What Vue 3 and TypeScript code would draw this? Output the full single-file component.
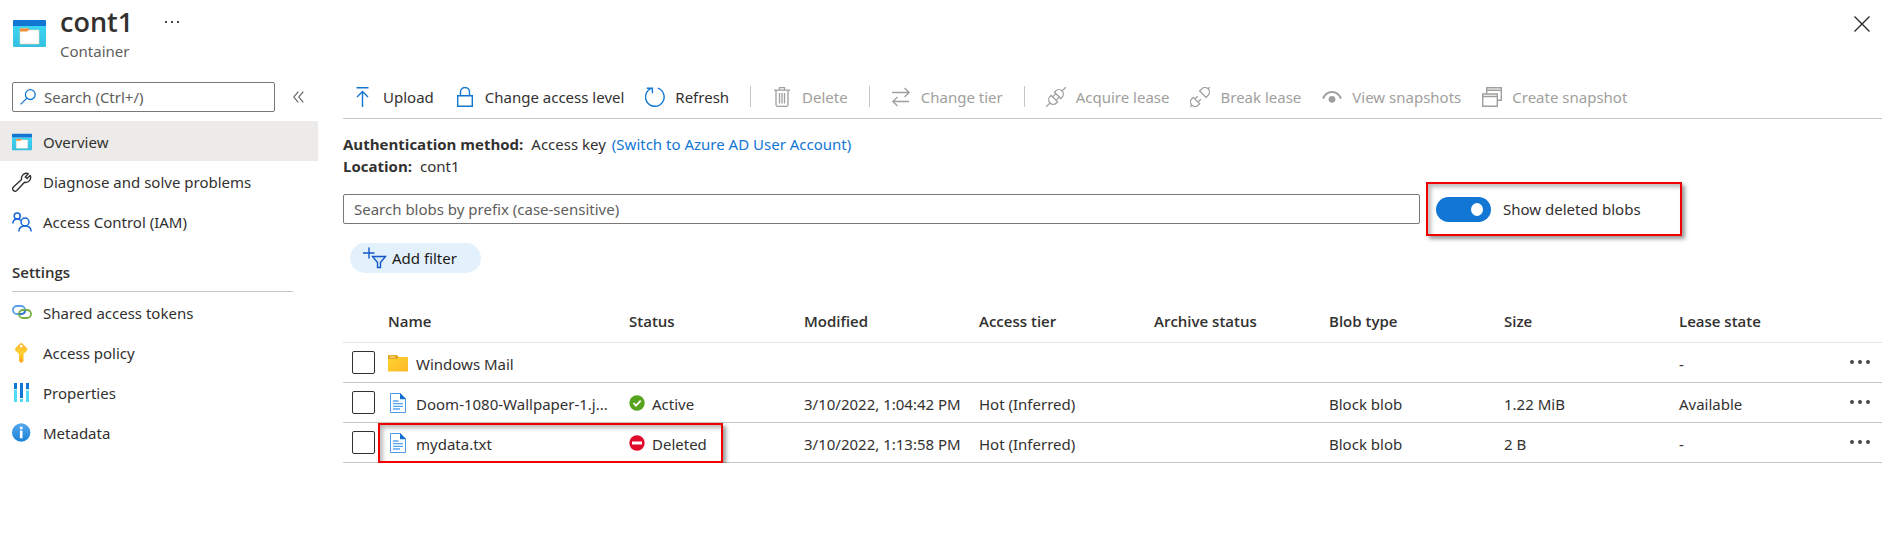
<script setup lang="ts">
import { ref } from 'vue'

interface NavItem {
  label: string
  icon: string
  active?: boolean
}

interface Command {
  label: string
  icon: string
  disabled?: boolean
  divider?: boolean
}

interface Blob {
  name: string
  kind: 'folder' | 'file'
  status: '' | 'Active' | 'Deleted'
  modified: string
  tier: string
  type: string
  size: string
  lease: string
  marked?: boolean
}

const generalItems: NavItem[] = [
  { label: 'Overview', icon: 'container', active: true },
  { label: 'Diagnose and solve problems', icon: 'wrench' },
  { label: 'Access Control (IAM)', icon: 'people' },
]

const settingsItems: NavItem[] = [
  { label: 'Shared access tokens', icon: 'link' },
  { label: 'Access policy', icon: 'key' },
  { label: 'Properties', icon: 'bars' },
  { label: 'Metadata', icon: 'info' },
]

const navGroups = [
  { title: '', items: generalItems },
  { title: 'Settings', items: settingsItems },
]

const commands: Command[] = [
  { label: 'Upload', icon: 'upload' },
  { label: 'Change access level', icon: 'lock' },
  { label: 'Refresh', icon: 'refresh' },
  { label: 'Delete', icon: 'trash', disabled: true, divider: true },
  { label: 'Change tier', icon: 'swap', disabled: true, divider: true },
  { label: 'Acquire lease', icon: 'plug', disabled: true, divider: true },
  { label: 'Break lease', icon: 'unplug', disabled: true },
  { label: 'View snapshots', icon: 'eye', disabled: true },
  { label: 'Create snapshot', icon: 'windows', disabled: true },
]

const columns = ['Name', 'Status', 'Modified', 'Access tier', 'Archive status', 'Blob type', 'Size', 'Lease state']

const blobs: Blob[] = [
  { name: 'Windows Mail', kind: 'folder', status: '', modified: '', tier: '', type: '', size: '', lease: '-' },
  { name: 'Doom-1080-Wallpaper-1.j...', kind: 'file', status: 'Active', modified: '3/10/2022, 1:04:42 PM', tier: 'Hot (Inferred)', type: 'Block blob', size: '1.22 MiB', lease: 'Available' },
  { name: 'mydata.txt', kind: 'file', status: 'Deleted', modified: '3/10/2022, 1:13:58 PM', tier: 'Hot (Inferred)', type: 'Block blob', size: '2 B', lease: '-', marked: true },
]

const menuQuery = ref('')
const prefix = ref('')
const showDeleted = ref(true)
const selected = ref<string[]>([])
</script>

<template>
  <div class="page">
    <svg class="defs" width="0" height="0" aria-hidden="true">
      <defs>
        <linearGradient id="g-cyan" x1="0" y1="0" x2="0" y2="1">
          <stop offset="0" stop-color="#3bd5f5" />
          <stop offset="1" stop-color="#35bfe0" />
        </linearGradient>
        <linearGradient id="g-gold" x1="0" y1="0" x2="0" y2="1">
          <stop offset="0" stop-color="#ffb52e" />
          <stop offset="0.5" stop-color="#ffd02e" />
          <stop offset="1" stop-color="#f9a51c" />
        </linearGradient>
        <linearGradient id="g-folder" x1="0" y1="0" x2="1" y2="1">
          <stop offset="0" stop-color="#ffd52e" />
          <stop offset="1" stop-color="#fdb827" />
        </linearGradient>
        <linearGradient id="g-info" x1="0" y1="0" x2="0" y2="1">
          <stop offset="0" stop-color="#55a8ec" />
          <stop offset="1" stop-color="#1b83d6" />
        </linearGradient>
        <symbol id="i-container" viewBox="0 0 33 27">
          <path d="M0 6h33v19.500a1.500 1.500 0 0 1-1.500 1.500h-30A1.500 1.500 0 0 1 0 25.500z" fill="url(#g-cyan)" />
          <path d="M1 0h31a1 1 0 0 1 1 1v5H0V1a1 1 0 0 1 1-1z" fill="#1176d4" />
          <path d="M7 9.500a1 1 0 0 1 1-1h7l1.500 1.500H26v14H7z" fill="#fff" stroke="#efd3ae" stroke-width="0.600" />
          <path d="M7 9.500a1 1 0 0 1 1-1h7.500l1 1-2.500 2H7z" fill="#f28c34" />
        </symbol>
        <symbol id="i-wrench" viewBox="0 0 20 20">
          <path d="M18.200 3.400 15 6.400 13.300 5l3-3.300A5 5 0 0 0 9.600 7.400L1.400 15a2.300 2.300 0 0 0 3.400 3.400l7.700-8.100a5 5 0 0 0 5.700-6.900z" fill="none" stroke="#323130" stroke-width="1.400" stroke-linejoin="round" />
        </symbol>
        <symbol id="i-people" viewBox="0 0 20 20">
          <g fill="none" stroke="#1766d6" stroke-width="1.500">
            <circle cx="5.200" cy="4" r="3" />
            <circle cx="13" cy="10" r="4" />
            <path d="M.800 11.500C1 8.300 3 7 5.400 7c1.600 0 2.700.600 3.500 1.500M6.800 19.500c.200-3.500 2.900-5.500 6.200-5.500s6 2 6.200 5.500" />
          </g>
        </symbol>
        <symbol id="i-link" viewBox="0 0 20 20">
          <rect x="1" y="3" width="12" height="8" rx="4" fill="none" stroke="#5a9fe8" stroke-width="1.800" />
          <rect x="7" y="7" width="12" height="8" rx="4" fill="none" stroke="#76b041" stroke-width="1.800" />
          <path d="M7.500 11H9.500c2 0 3.500-1.500 3.500-3.500" fill="none" stroke="#3479cf" stroke-width="1.800" />
        </symbol>
        <symbol id="i-key" viewBox="0 0 20 20">
          <path fill-rule="evenodd" d="M8 .500q1.200-.800 2.400 0l4.500 4.500q1 1.500 0 2.800L11.500 11v7l-2 2-2.500-1.700V11L3.500 7.800Q2.500 6.500 3.500 5zM9.200 1.700a1.400 1.400 0 1 0 .01 0z" fill="url(#g-gold)" />
        </symbol>
        <symbol id="i-bars" viewBox="0 0 20 20">
          <path d="M2 6h3v13H2zM8 16h3v3H8zM14 8h3v11h-3z" fill="#50dcf7" />
          <path d="M2 0h3v6H2zM8 0h3v15H8zM14 0h3v6h-3z" fill="#1176d4" />
          <path d="M2 6h3v1H2zM14 6h3v2h-3z" fill="#bdeefb" />
        </symbol>
        <symbol id="i-info" viewBox="0 0 20 20">
          <circle cx="9.200" cy="9.500" r="9.200" fill="url(#g-info)" />
          <path d="M7.900 3.800h2.600v2.400H7.900zM7.900 7.400h2.600v7.800H7.900z" fill="#fff" />
        </symbol>
        <symbol id="i-upload" viewBox="0 0 20 20">
          <path d="M3.500.700h12M9.500 20V4.500M4 10l5.500-5.500L15 10" fill="none" stroke="currentColor" stroke-width="1.400" />
        </symbol>
        <symbol id="i-lock" viewBox="0 0 20 20">
          <path d="M2.700 8.700h14.600v10.600H2.700zM5.500 8.700V5a4.500 4.500 0 0 1 9 0v3.700" fill="none" stroke="currentColor" stroke-width="1.400" />
        </symbol>
        <symbol id="i-refresh" viewBox="0 0 20 20">
          <path d="M12.800 1.200a9.300 9.300 0 1 1-6.500.200M1.800 1.200h5.600v5" fill="none" stroke="currentColor" stroke-width="1.400" />
        </symbol>
        <symbol id="i-trash" viewBox="0 0 20 20">
          <path d="M2 3.200h16M7.500 3V.700h5V3M4 3.500v14.300q0 1.500 1.500 1.500h9q1.500 0 1.500-1.500V3.500M7.500 6v10.500M10 6v10.500M12.500 6v10.500" fill="none" stroke="currentColor" stroke-width="1.300" />
        </symbol>
        <symbol id="i-swap" viewBox="0 0 20 20">
          <path d="M1 5.500h17M13.500 1l4.700 4.500L13.500 10M18 14.500H2M6.500 10l-4.700 4.500L6.500 19" fill="none" stroke="currentColor" stroke-width="1.300" />
        </symbol>
        <symbol id="i-plug" viewBox="0 0 20 20">
          <g transform="rotate(-45 10 10)" fill="none" stroke="currentColor" stroke-width="1.300">
            <path d="M-4 10h5M19 10h5M7.700 5.500H6a4.500 4.500 0 0 0 0 9h1.700zM12.300 5.500H14a4.500 4.500 0 0 1 0 9h-1.700zM7.700 7.500h4.600M7.700 12.500h4.600" />
          </g>
        </symbol>
        <symbol id="i-unplug" viewBox="0 0 20 20">
          <g transform="rotate(-45 10 10)" fill="none" stroke="currentColor" stroke-width="1.300">
            <path d="M-4 10h2.500M21.500 10h2.500M5 5.500H3a4.500 4.500 0 0 0 0 9h2zM14 5.500h3a4.500 4.500 0 0 1 0 9h-3zM5 7.800h4M5 12.200h4" />
          </g>
        </symbol>
        <symbol id="i-eye" viewBox="0 0 20 20">
          <path d="M1 11.500C3 7 6 5 10 5s7 2 9 6.500" fill="none" stroke="currentColor" stroke-width="2" />
          <circle cx="10" cy="12.300" r="3.400" fill="currentColor" />
        </symbol>
        <symbol id="i-windows" viewBox="0 0 20 20">
          <path d="M.700 7h14.600v12.300H.700zM.700 9.500h14.600M4.700 6.500V.700h14.600v12.600H16M4.700 3.200h14.600" fill="none" stroke="currentColor" stroke-width="1.400" />
        </symbol>
        <symbol id="i-folder" viewBox="0 0 20 20">
          <path d="M0 3q0-.800.800-.800h8L10.500 4H20v14.500H0z" fill="url(#g-folder)" />
          <path d="M0 3q0-.800.800-.800h8L10.500 4 9 5.800H0z" fill="#e09a13" />
          <path d="M1.500 3.500h6v1h-6z" fill="#fff1c2" />
        </symbol>
        <symbol id="i-file" viewBox="0 0 20 20">
          <path d="M2.500.500h9.800l5.200 5.300v13.700h-15z" fill="#fff" stroke="#4f9be6" />
          <path d="M12 0l6 6.200h-6z" fill="#1470cf" />
          <path d="M5 8h5.500M5 10.700h10M5 13.300h10M5 16h7" stroke="#5aa5ee" stroke-width="1.300" />
        </symbol>
      </defs>
    </svg>

    <header class="header">
      <svg class="header-icon"><use href="#i-container" /></svg>
      <div class="heading">
        <div class="title-row">
          <h1>cont1</h1>
          <button class="icon-button" aria-label="More actions">
            <svg width="15" height="3" viewBox="0 0 15 3"><path d="M0 0h2v2H0zM6 0h2v2H6zM12 0h2v2h-2z" fill="#484644" /></svg>
          </button>
        </div>
        <p>Container</p>
      </div>
      <button class="icon-button close" aria-label="Close">
        <svg width="16" height="16" viewBox="0 0 16 16"><path d="M.500.500l15 15M15.500.500l-15 15" stroke="#252423" stroke-width="1.300" /></svg>
      </button>
    </header>

    <div class="body">
      <aside class="sidebar">
        <div class="menu-search">
          <label class="search-box">
            <svg width="16" height="16" viewBox="0 0 16 16"><path d="M.600 15.400l6-6M15.200 5.600a4.900 4.900 0 1 1-9.800 0 4.900 4.900 0 0 1 9.800 0z" fill="none" stroke="#1176d4" stroke-width="1.300" /></svg>
            <input v-model="menuQuery" type="text" placeholder="Search (Ctrl+/)" aria-label="Search menu" />
          </label>
          <button class="icon-button" aria-label="Collapse menu">
            <svg width="11" height="12" viewBox="0 0 11 12"><path d="M5.300.700L.800 6l4.500 5.300M10.300.700L5.800 6l4.500 5.300" fill="none" stroke="#605e5c" stroke-width="1.100" /></svg>
          </button>
        </div>
        <nav>
          <section v-for="group in navGroups" :key="group.title">
            <h2 v-if="group.title">{{ group.title }}</h2>
            <ul>
              <li v-for="item in group.items" :key="item.label">
                <a href="#" class="nav-link" :class="{ active: item.active }">
                  <svg class="nav-icon"><use :href="'#i-' + item.icon" /></svg>
                  <span>{{ item.label }}</span>
                </a>
              </li>
            </ul>
          </section>
        </nav>
      </aside>

      <main class="main">
        <div class="toolbar">
          <template v-for="command in commands" :key="command.label">
            <span v-if="command.divider" class="divider"></span>
            <button class="command" :disabled="command.disabled">
              <svg class="command-icon"><use :href="'#i-' + command.icon" /></svg>
              <span>{{ command.label }}</span>
            </button>
          </template>
        </div>

        <dl class="facts">
          <div>
            <dt>Authentication method:</dt>
            <dd><span>Access key</span> <a href="#">(Switch to Azure AD User Account)</a></dd>
          </div>
          <div>
            <dt>Location:</dt>
            <dd>cont1</dd>
          </div>
        </dl>

        <div class="filter-row">
          <input v-model="prefix" class="prefix" type="text" placeholder="Search blobs by prefix (case-sensitive)" aria-label="Search blobs by prefix" />
          <label class="toggle callout">
            <input v-model="showDeleted" type="checkbox" role="switch" />
            <span>Show deleted blobs</span>
          </label>
        </div>

        <button class="add-filter">
          <svg width="24" height="22" viewBox="0 0 24 22">
            <path d="M0 6h11.500M6 .500v11" stroke="#1557c8" stroke-width="1.400" />
            <path d="M9.500 9.500h13l-5 6v5h-3v-5z" fill="#d5e9fb" stroke="#1557c8" stroke-width="1.400" />
          </svg>
          <span>Add filter</span>
        </button>

        <table class="blobs">
          <colgroup>
            <col class="col-check" />
            <col />
            <col v-for="n in 6" :key="n" class="col-data" />
            <col class="col-lease" />
            <col class="col-menu" />
          </colgroup>
          <thead>
            <tr>
              <td></td>
              <th v-for="column in columns" :key="column" scope="col">{{ column }}</th>
              <td></td>
            </tr>
          </thead>
          <tbody>
            <tr v-for="blob in blobs" :key="blob.name">
              <td class="check-cell"><input v-model="selected" type="checkbox" :value="blob.name" :aria-label="'Select ' + blob.name" /></td>
              <td class="name-cell">
                <div class="name">
                  <svg class="blob-icon"><use :href="'#i-' + blob.kind" /></svg>
                  <span>{{ blob.name }}</span>
                </div>
                <i v-if="blob.marked" class="row-callout callout"></i>
              </td>
              <td>
                <div v-if="blob.status" class="status">
                  <svg class="status-icon" viewBox="0 0 16 16">
                    <template v-if="blob.status === 'Active'">
                      <circle cx="8" cy="8" r="7.700" fill="#57a31d" />
                      <path d="M4.500 8l2.500 2.700 4.700-5" fill="none" stroke="#fff" stroke-width="1.800" />
                    </template>
                    <template v-else>
                      <circle cx="8" cy="8" r="7.700" fill="#e00b2b" />
                      <path d="M3 6.500h10v3H3z" fill="#fff" />
                    </template>
                  </svg>
                  <span>{{ blob.status }}</span>
                </div>
              </td>
              <td>{{ blob.modified }}</td>
              <td>{{ blob.tier }}</td>
              <td></td>
              <td>{{ blob.type }}</td>
              <td>{{ blob.size }}</td>
              <td>{{ blob.lease }}</td>
              <td class="menu-cell">
                <button class="icon-button" :aria-label="'Actions for ' + blob.name">
                  <svg width="20" height="4" viewBox="0 0 20 4"><g fill="#484644"><circle cx="2" cy="2" r="2" /><circle cx="10" cy="2" r="2" /><circle cx="18" cy="2" r="2" /></g></svg>
                </button>
              </td>
            </tr>
          </tbody>
        </table>
      </main>
    </div>
  </div>
</template>

<style>
body {
  margin: 0;
  background: #fff;
}
</style>

<style scoped>
.page {
  color: #323130;
  font-family: 'Noto Sans', 'Open Sans', sans-serif;
  font-size: 15px;
  line-height: 22px;
}

.page * {
  box-sizing: border-box;
}

.defs {
  position: absolute;
}

button,
input {
  font: inherit;
  color: inherit;
}

a {
  color: #1176d4;
  text-decoration: none;
}

svg {
  display: block;
  flex: none;
}

h1,
h2,
th,
dt {
  font-family: 'Open Sans', 'Noto Sans', sans-serif;
}

.icon-button {
  display: flex;
  padding: 0;
  border: 0;
  background: none;
}

.header {
  display: flex;
  align-items: flex-start;
  height: 82px;
  padding: 4px 24px 0 13px;
}

.header-icon {
  width: 33px;
  height: 27px;
  margin: 16px 14px 0 0;
}

.title-row {
  display: flex;
  align-items: center;
  gap: 32px;
}

h1 {
  margin: 0;
  font-size: 27px;
  font-weight: 600;
  line-height: 36px;
}

.heading p {
  margin: 0;
  color: #605e5c;
}

.close {
  margin: 12px 0 0 auto;
}

.body {
  display: flex;
}

.sidebar {
  flex: none;
  width: 318px;
  margin-right: 25px;
}

.menu-search {
  display: flex;
  align-items: center;
  gap: 18px;
  padding: 0 12px 9px;
}

.search-box {
  display: flex;
  align-items: center;
  gap: 8px;
  width: 263px;
  height: 30px;
  padding: 0 7px;
  border: 1px solid #7a7876;
  border-radius: 2px;
}

.search-box input {
  min-width: 0;
  flex: 1;
  padding: 0;
  border: 0;
  outline: 0;
  background: none;
}

input::placeholder {
  color: #605e5c;
  opacity: 1;
}

h2 {
  margin: 20px 25px 0 12px;
  padding-bottom: 8px;
  border-bottom: 1px solid #c8c6c4;
  font-size: 15px;
  font-weight: 600;
}

ul {
  margin: 0;
  padding: 0;
  list-style: none;
}

.nav-link {
  display: flex;
  align-items: center;
  gap: 11px;
  height: 40px;
  padding: 2px 12px 0;
  color: inherit;
}

.nav-link.active {
  background: #edebe9;
}

.nav-icon {
  width: 20px;
  height: 20px;
}

.main {
  flex: 1;
  min-width: 0;
  padding-right: 12px;
}

.toolbar {
  display: flex;
  align-items: center;
  gap: 21px;
  height: 37px;
  padding: 0 0 7px 10px;
  border-bottom: 1px solid #c8c6c4;
}

.command {
  display: flex;
  align-items: center;
  gap: 10px;
  padding: 0;
  border: 0;
  background: none;
  white-space: nowrap;
}

.command-icon {
  width: 20px;
  height: 20px;
  color: #1176d4;
}

.command:disabled,
.command:disabled .command-icon {
  color: #a19f9d;
}

.divider {
  width: 1px;
  height: 21px;
  background: #c8c6c4;
}

.facts {
  margin: 14px 0 0;
}

.facts div {
  display: flex;
  gap: 8px;
}

dt {
  font-weight: 700;
}

dd {
  display: flex;
  gap: 6px;
  margin: 0;
}

.filter-row {
  display: flex;
  align-items: center;
  gap: 6px;
  margin-top: 5px;
}

.prefix {
  flex: 1;
  min-width: 0;
  height: 30px;
  padding: 0 10px;
  border: 1px solid #7a7876;
  border-radius: 2px;
}

.callout {
  border: 2px solid #f00000;
  box-shadow: 3px 3px 4px #00000066, inset 3px 3px 4px #00000044;
}

.toggle {
  display: flex;
  align-items: center;
  gap: 12px;
  width: 256px;
  height: 54px;
  margin-right: 200px;
  padding-left: 8px;
}

.toggle input {
  appearance: none;
  display: flex;
  align-items: center;
  width: 55px;
  height: 25px;
  margin: 0;
  padding: 0 8px;
  border-radius: 13px;
  background: #8a8886;
}

.toggle input::before {
  content: '';
  width: 12px;
  height: 13px;
  border-radius: 50%;
  background: #fff;
}

.toggle input:checked {
  justify-content: flex-end;
  background: #1176d4;
}

.add-filter {
  display: flex;
  align-items: center;
  gap: 5px;
  height: 30px;
  margin: 7px 0 0 7px;
  padding: 0 24px 0 13px;
  border: 0;
  border-radius: 15px;
  background: #e3f1fc;
  color: #1b1a19;
}

.blobs {
  width: 100%;
  margin-top: 27px;
  border-collapse: collapse;
  table-layout: fixed;
}

.col-check {
  width: 45px;
}

.col-data {
  width: 175px;
}

.col-lease {
  width: 160px;
}

.col-menu {
  width: 43px;
}

tr {
  height: 40px;
  border-bottom: 1px solid #c8c6c4;
}

thead tr {
  height: 42px;
  border-color: #e6e4e2;
}

th,
td {
  padding: 0;
  white-space: nowrap;
  text-align: left;
}

th {
  font-weight: 600;
}

tbody td {
  padding-top: 4px;
}

tbody .check-cell {
  padding: 0 0 0 9px;
}

.check-cell input {
  appearance: none;
  display: block;
  width: 23px;
  height: 23px;
  margin: 0;
  border: 1px solid #323130;
  border-radius: 2px;
}

.check-cell input:checked {
  background: #1176d4;
}

.name-cell {
  position: relative;
}

.name {
  display: flex;
  align-items: center;
  gap: 8px;
}

.blob-icon {
  width: 20px;
  height: 20px;
  margin-bottom: 2px;
}

.row-callout {
  position: absolute;
  top: 0;
  left: -10px;
  width: 345px;
  height: 40px;
}

.status {
  display: flex;
  align-items: center;
  gap: 7px;
}

.status-icon {
  width: 16px;
  height: 16px;
  margin-bottom: 2px;
}

tbody .menu-cell {
  padding: 0 0 1px 11px;
}
</style>
